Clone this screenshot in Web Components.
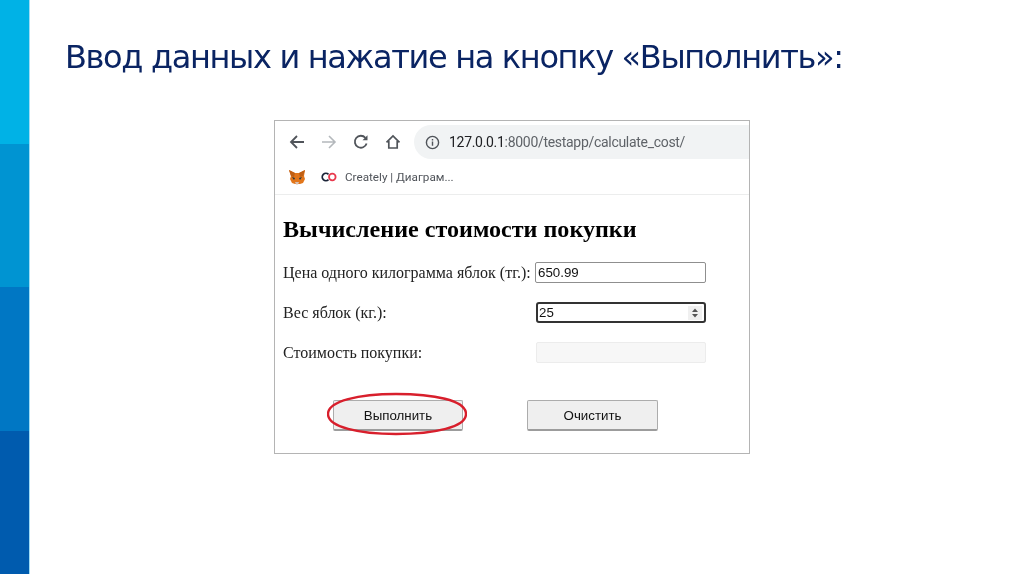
<!DOCTYPE html>
<html lang="ru">
<head>
<meta charset="utf-8">
<title>Ввод данных</title>
<style>
	html, body { margin: 0; padding: 0; background: #fff; }
</style>
</head>
<body>
<slide-page>
	<slide-title>Ввод данных и нажатие на кнопку «Выполнить»:</slide-title>
	<browser-shot>
		<form-row label="Цена одного килограмма яблок (тг.):" value="650.99"></form-row>
		<form-row label="Вес яблок (кг.):" value="25" kind="focus"></form-row>
		<form-row label="Стоимость покупки:" kind="off"></form-row>
		<div slot="buttons">
			<push-button circled>Выполнить</push-button>
			<push-button style="width:131px">Очистить</push-button>
		</div>
	</browser-shot>
</slide-page>
<script>
;(function(customElements) {
	class SlidePage extends HTMLElement {
		constructor() {
			super()
			this.attachShadow({ mode: 'open' })
			this.shadowRoot.innerHTML = `
				<style>
					:host {
						display: grid;
						grid-template-columns: 29px 1px 1fr;
						width: 1024px;
						height: 574px;
						overflow: hidden;
					}
					.stripe {
						display: grid;
						grid-template-rows: repeat(4, 1fr);
					}
					.stripe i:nth-child(1) { background: #00b2e6; }
					.stripe i:nth-child(2) { background: #0094d2; }
					.stripe i:nth-child(3) { background: #0077c4; }
					.stripe i:nth-child(4) { background: #005bae; }
					.edge { background: #9fdcf5; }
					main {
						display: flex;
						flex-direction: column;
						padding: 34px 0 0 35px;
					}
				</style>
				<div class="stripe"><i></i><i></i><i></i><i></i></div>
				<div class="edge"></div>
				<main><slot></slot></main>
			`
		}
	}

	class SlideTitle extends HTMLElement {
		constructor() {
			super()
			this.attachShadow({ mode: 'open' })
			this.shadowRoot.innerHTML = `
				<style>
					:host {
						display: block;
						height: 52px;
						font: 32px/46px "DejaVu Sans", sans-serif;
						letter-spacing: -1.35px;
						color: #0a2463;
						white-space: nowrap;
						filter: blur(.3px);
					}
				</style>
				<slot></slot>
			`
		}
	}

	class BrowserShot extends HTMLElement {
		constructor() {
			super()
			this.attachShadow({ mode: 'open' })
			this.shadowRoot.innerHTML = `
				<style>
					:host {
						display: block;
						box-sizing: border-box;
						width: 476px;
						height: 334px;
						margin: 34px 0 0 209px;
						border: 1px solid #b4b4b4;
						background: #fff;
						overflow: hidden;
						filter: blur(.45px);
					}
					.toolbar {
						display: flex;
						align-items: center;
						height: 38px;
						padding: 4px 0 0 14px;
						box-sizing: border-box;
					}
					.toolbar svg { flex: none; display: block; }
					.toolbar .nav { width: 16px; height: 16px; margin-right: 16px; }
					.pill {
						flex: 1;
						display: flex;
						align-items: center;
						height: 34px;
						margin-left: 13px;
						padding-left: 11px;
						background: #f1f3f4;
						border-radius: 17px 0 0 17px;
						font: 14px "Roboto", "Liberation Sans", sans-serif;
						letter-spacing: -.3px;
						color: #5f6368;
						white-space: nowrap;
					}
					.pill svg { margin-right: 9px; }
					.pill b { font-weight: 400; color: #202124; }
					.marks {
						display: flex;
						align-items: center;
						height: 36px;
						padding: 0 0 0 14px;
						box-sizing: border-box;
						border-bottom: 1px solid #eceded;
						font: 11.7px "Roboto", "Liberation Sans", sans-serif;
						color: #50545a;
						white-space: nowrap;
					}
					.marks svg { flex: none; display: block; }
					.marks .fox { margin-right: 16px; }
					.marks .ring { margin-right: 8px; }
					.content { padding: 19px 0 0 8px; }
					h1 {
						margin: 0 0 18px;
						font: bold 24.1px/30px "Liberation Serif", serif;
						color: #000;
						white-space: nowrap;
					}
					.rows { display: grid; grid-auto-rows: 40px; }
					.buttons { margin-top: 18px; }
					::slotted([slot=buttons]) {
						display: flex;
						gap: 64px;
						padding-left: 50px;
					}
				</style>
				<div class="toolbar">
					<svg class="nav" viewBox="0 0 16 16" fill="none" stroke="#50545a" stroke-width="1.8"><path d="M15 8H2M8 2 2 8l6 6"/></svg>
					<svg class="nav" viewBox="0 0 16 16" fill="none" stroke="#b4b8bc" stroke-width="1.6"><path d="M1 8h13M8 2l6 6-6 6"/></svg>
					<svg class="nav" viewBox="0 0 16 16" fill="none" stroke="#50545a" stroke-width="1.8"><path d="M13.600 9.500A6 6 0 1 1 12.400 3.800"/><path d="M14.500 1.200v5h-5z" fill="#50545a" stroke="none"/></svg>
					<svg class="nav" viewBox="0 0 16 16" fill="none" stroke="#50545a" stroke-width="1.7" style="margin-right:0"><path d="M1.500 8.300 8 2l6.500 6.300M3.800 7v7h8.400V7"/></svg>
					<div class="pill">
						<svg width="15" height="15" viewBox="0 0 16 16" fill="none" stroke="#50545a" stroke-width="1.5"><circle cx="8" cy="8" r="6.500"/><path d="M8 7v4.500M8 4.200v1.600"/></svg>
						<span><b>127.0.0.1</b>:8000/testapp/calculate_cost/</span>
					</div>
				</div>
				<div class="marks">
					<svg class="fox" width="16" height="16" viewBox="0 0 16 16">
						<path d="M0 1l6 3h4l6-3-1 6 1 3-2 4-3 1H6l-3-1-2-4 1-3z" fill="#e2761b"/>
						<path d="M3 8l3 1-1 2zM13 8l-3 1 1 2z" fill="#23343f"/>
						<path d="M6 13h4l-1 2.500H7z" fill="#d7c1b3"/>
						<path d="M0 1l6 3-1 4-3-1zM16 1l-6 3 1 4 3-1z" fill="#c05f14"/>
					</svg>
					<svg class="ring" width="16" height="10" viewBox="0 0 16 10" fill="none" stroke-width="1.800">
						<path d="M7.500 2.300A3.700 3.700 0 1 0 7.500 7.700" stroke="#1b2437"/>
						<circle cx="11.300" cy="5" r="3.300" stroke="#e8394d"/>
					</svg>
					<span>Creately | Диаграм...</span>
				</div>
				<div class="content">
					<h1>Вычисление стоимости покупки</h1>
					<div class="rows"><slot></slot></div>
					<div class="buttons"><slot name="buttons"></slot></div>
				</div>
			`
		}
	}

	class FormRow extends HTMLElement {
		constructor() {
			super()
			this.attachShadow({ mode: 'open' })
		}

		connectedCallback() {
			this.render()
		}

		render() {
			let kind = this.getAttribute('kind') || 'plain'
			let value = this.getAttribute('value') || ''
			this.shadowRoot.innerHTML = `
				<style>
					:host {
						display: grid;
						grid-template-columns: 252px 171px;
						align-items: start;
						font: 16px/21px "Liberation Serif", serif;
						color: #222;
						white-space: nowrap;
					}
					.box {
						box-sizing: border-box;
						display: flex;
						align-items: center;
						justify-content: space-between;
						height: 21px;
						padding: 0 3px 0 2px;
						border: 1px solid #8f8f8f;
						border-radius: 2px;
						font: 13.3px "Liberation Sans", sans-serif;
						color: #111;
					}
					.focus { border: 2px solid #333; border-radius: 3px; margin-left: 1px; padding: 0 2px 0 1px; }
					.off { border-color: #ececec; background: #f7f7f7; margin-left: 1px; }
					.spin { display: block; background: #f0f0f0; padding: 1px 2px; }
				</style>
				<span>${this.getAttribute('label')}</span>
				<div class="box ${kind}">
					<span>${value}</span>
					${kind === 'focus' ? '<svg class="spin" width="10" height="12" viewBox="0 0 10 12" fill="#555"><path d="M5 1.500 8 5H2zM5 10.500 2 7h6z"/></svg>' : ''}
				</div>
			`
		}
	}

	class PushButton extends HTMLElement {
		constructor() {
			super()
			this.attachShadow({ mode: 'open' })
		}

		connectedCallback() {
			this.shadowRoot.innerHTML = `
				<style>
					:host {
						position: relative;
						display: flex;
						align-items: center;
						justify-content: center;
						box-sizing: border-box;
						width: 130px;
						height: 31px;
						background: #efefef;
						border: 1px solid #acacac;
						border-bottom: 2px solid #9c9c9c;
						border-radius: 2px;
						font: 13.3px "Liberation Sans", sans-serif;
						color: #111;
					}
					svg { position: absolute; left: -7px; top: -9px; }
				</style>
				<slot></slot>
				${this.hasAttribute('circled') ? `<svg width="140" height="44" viewBox="0 0 140 44" fill="none"><path d="M69 2C32 2 1 9 1 22c0 13 31 20 68 20 39 0 70-7 70-20C139 8 106 2 69 2z" stroke="#d81f2c" stroke-width="2.400"/></svg>` : ''}
			`
		}
	}

	customElements.define('slide-page', SlidePage)
	customElements.define('slide-title', SlideTitle)
	customElements.define('browser-shot', BrowserShot)
	customElements.define('form-row', FormRow)
	customElements.define('push-button', PushButton)
})(customElements)
</script>
</body>
</html>
